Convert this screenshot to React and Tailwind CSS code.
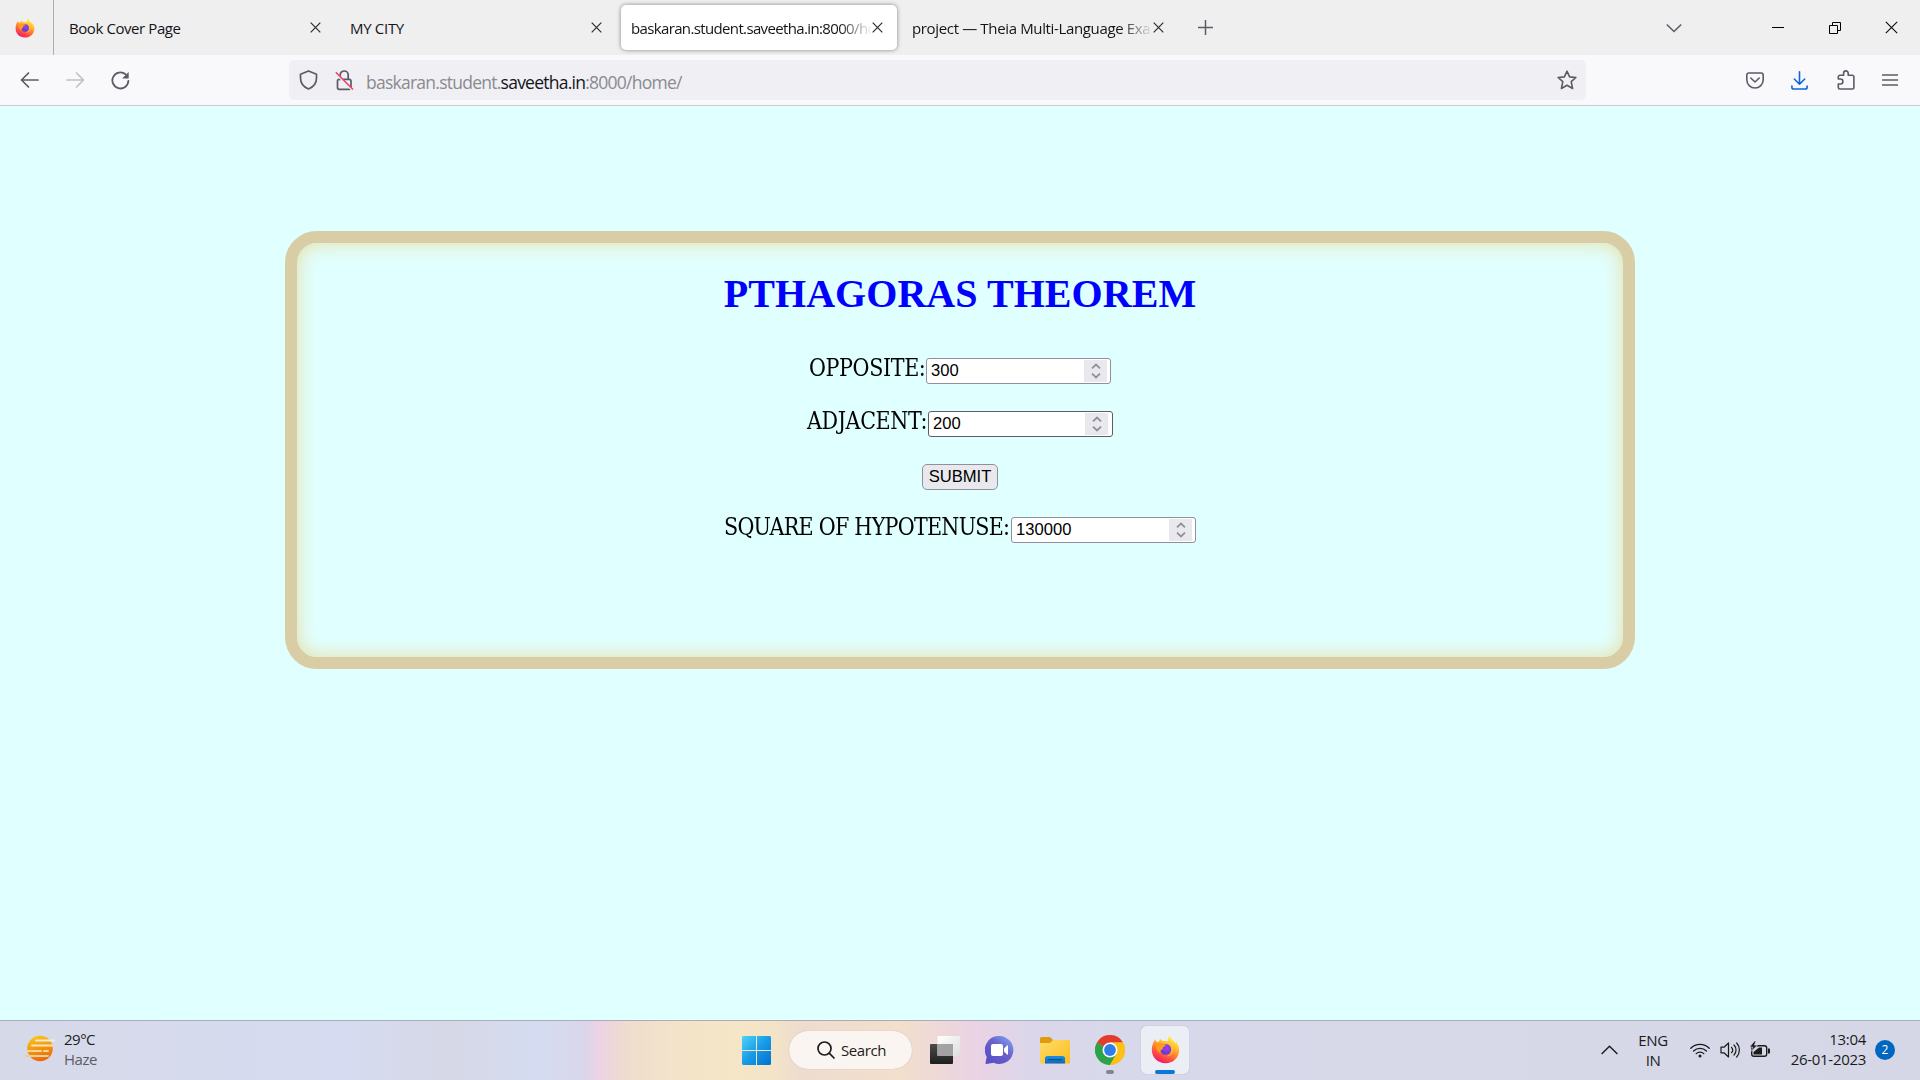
import React from "react";

const UI = "font-['Open_Sans','Noto_Sans',sans-serif]";

function Firefox({ size, id }) {
  return (
    <svg width={size} height={size} viewBox="0 0 32 32">
      <defs>
        <linearGradient id={id + "a"} x1="0.75" y1="0.05" x2="0.3" y2="1">
          <stop offset="0" stopColor="#fff44f" />
          <stop offset="0.3" stopColor="#ffc02e" />
          <stop offset="0.6" stopColor="#ff7033" />
          <stop offset="0.85" stopColor="#fb3350" />
          <stop offset="1" stopColor="#e31587" />
        </linearGradient>
        <radialGradient id={id + "b"} cx="0.6" cy="0.4" r="0.65">
          <stop offset="0" stopColor="#a33dea" />
          <stop offset="0.55" stopColor="#7a3be0" />
          <stop offset="1" stopColor="#4b3fd0" />
        </radialGradient>
      </defs>
      <path
        fill={"url(#" + id + "a)"}
        d="M21 0.500c-2.600 2.700-2.700 5.100-2.300 6.500-1.300-.5-3.500-.8-5-.4-1.500-.5-3-1.500-3.500-2.600-.8.800-1.200 2-1.100 3.100-.900 0-1.800.2-2.600.6C5.500 7 5 5.800 5 4.800 2.200 7.500.6 13 1 18c.6 7.500 7 13.200 15 13.200 8.400 0 15-6.500 15-14.200 0-4-1.600-8-4-10 .5 1.200.8 2.300.8 3.200C26.500 6.400 21.500 5.500 21 .5z"
      />
      <circle cx="16.300" cy="15.800" r="6" fill={"url(#" + id + "b)"} />
      <path
        fill="#ff9a1f"
        d="M6 10c2.500-1.800 5.500-1 7 .2 1.200-.1 3.300 0 3.500.7-.3 1.400-3 1.900-3.300 2.800-.2 1.200-.2 2.100-1.500 2.600-1.800.8-2 2.500-1.200 4C7 18.500 5 14 6 10z"
      />
      <path fill="#ffc42e" d="M19 7c4 2 6 6 5.500 10-.6 4-3.500 6.300-7 6.400 4.300-1.900 5.800-5.200 5-8.600C22 12 20.300 9.600 19 7z" opacity="0.75" />
    </svg>
  );
}

function Cross({ size = 11, color = "#2b2a33", sw = 1.2 }) {
  return (
    <svg width={size} height={size} viewBox="0 0 11 11" stroke={color} strokeWidth={sw} fill="none" className="shrink-0">
      <path d="M.7.7l9.600 9.600M10.300.7L.7 10.300" />
    </svg>
  );
}

function Tab({ title, active, fade, track }) {
  return (
    <div
      className={
        "flex h-[45px] w-[276px] items-center rounded-[5px] pl-[10px] pr-[14px] " +
        (active ? "bg-white shadow-[0_0_4px_rgba(0,0,0,0.45)]" : "")
      }
    >
      <div
        className={
          "h-[22px] w-[241px] shrink-0 whitespace-nowrap text-[15px] leading-[22px] text-[#15141a] " +
          track +
          (fade ? " [mask-image:linear-gradient(to_right,black_208px,transparent_241px)]" : "")
        }
      >
        {title}
      </div>
      <Cross size={11} />
    </div>
  );
}

function TabBar() {
  return (
    <div className="flex h-[55px] items-center bg-[#efefef]">
      <div className="flex h-full w-[54px] items-center border-r border-[#adadb0] pl-[15px]">
        <Firefox size={20} id="ft" />
      </div>
      <div className="ml-[5px] flex gap-[5px]">
        <Tab title="Book Cover Page" track="tracking-[-0.42px]" />
        <Tab title="MY CITY" track="tracking-[-0.3px]" />
        <Tab title="baskaran.student.saveetha.in:8000/ho" active fade track="tracking-[-0.64px]" />
        <Tab title="project — Theia Multi-Language Exa" fade track="tracking-[-0.35px]" />
      </div>
      <svg className="ml-[20px]" width="15" height="15" viewBox="0 0 15 15" stroke="#5b5b66" strokeWidth="1.500">
        <path d="M7.500 0v15M0 7.500h15" />
      </svg>
      <div className="ml-auto flex items-center">
        <svg className="mr-[90px]" width="16" height="10" viewBox="0 0 16 10" stroke="#5b5b66" strokeWidth="1.500" fill="none">
          <path d="M.8 1.500L8 8.500l7.200-7" />
        </svg>
        <div className="mr-[45px] h-px w-3 bg-black" />
        <svg className="mr-[44px]" width="12" height="12" viewBox="0 0 12 12" stroke="#000" fill="none">
          <path d="M.5 3.500h8v8h-8zM3.500 3.500v-3h8v8h-3" />
        </svg>
        <div className="mr-[22px]">
          <Cross size={13} color="#111" sw={1} />
        </div>
      </div>
    </div>
  );
}

function Toolbar() {
  return (
    <div className="flex h-[51px] items-center border-b border-[#c8cacc] bg-[#f9f9fb]">
      <svg className="ml-[20px]" width="19" height="16" viewBox="0 0 19 16" stroke="#5b5b66" strokeWidth="1.700" fill="none" strokeLinecap="round" strokeLinejoin="round">
        <path d="M18 8H1.500M8.500 1L1.500 8l7 7" />
      </svg>
      <svg className="ml-[27px]" width="19" height="16" viewBox="0 0 19 16" stroke="#bfbfc5" strokeWidth="1.700" fill="none" strokeLinecap="round" strokeLinejoin="round">
        <path d="M1 8h16.500M10.500 1l7 7-7 7" />
      </svg>
      <svg className="ml-[26px]" width="19" height="19" viewBox="0 0 19 19" stroke="#5b5b66" strokeWidth="1.800" fill="none" strokeLinecap="round">
        <path d="M14.500 3.300A8 8 0 1 0 17.400 9.800" />
        <path d="M17.700 1v6.500h-6.500z" fill="#5b5b66" stroke="none" />
      </svg>
      <div className="ml-[159px] flex h-10 w-[1297px] items-center rounded-[5px] bg-[#f0f0f4] pl-[10px] pr-[9px]">
        <svg width="19" height="20" viewBox="0 0 19 20" stroke="#5b5b66" strokeWidth="1.700" fill="none" strokeLinejoin="round">
          <path d="M9.500 1L17.500 4.300V8c0 5.200-3 9-8 11C4.500 17 1.500 13.200 1.500 8V4.300z" />
        </svg>
        <svg className="ml-[17px]" width="19" height="21" viewBox="0 0 19 21" fill="none" stroke="#5b5b66" strokeWidth="1.700">
          <rect x="2.500" y="9.300" width="13.500" height="10" rx="1.800" />
          <path d="M5.200 9.300V5a4 4 0 0 1 8 0v4.300" />
          <path d="M0 2.800l17.500 17.500" stroke="#f0f0f4" strokeWidth="2" />
          <path d="M.8 2.300L18 19.500" stroke="#f04066" strokeWidth="1.600" />
        </svg>
        <div className="ml-[12px] mt-[3px] whitespace-nowrap text-[17.500px] leading-6 tracking-[-0.75px] text-[#8a8a90]">
          baskaran.student.<span className="text-[#15141a]">saveetha.in</span>:8000/home/
        </div>
        <svg className="ml-auto" width="20" height="20" viewBox="0 0 20 20" stroke="#5b5b66" strokeWidth="1.600" fill="none" strokeLinejoin="round">
          <path d="M10 1.200l2.600 5.700 6.300.6-4.700 4.200 1.400 6.800L10 15.200l-5.600 3.300 1.400-6.800L1.100 7.500l6.300-.6z" />
        </svg>
      </div>
      <div className="ml-auto mr-[22px] flex items-center">
        <svg width="18" height="17" viewBox="0 0 18 17" stroke="#5b5b66" strokeWidth="1.600" fill="none" strokeLinecap="round" strokeLinejoin="round">
          <path d="M2.800 1h12.400a2 2 0 0 1 2 2v4.800a8.200 8.200 0 0 1-16.400 0V3a2 2 0 0 1 2-2z" />
          <path d="M4.800 6l4.200 4 4.200-4" />
        </svg>
        <svg className="ml-[27px]" width="17" height="19" viewBox="0 0 17 19" stroke="#0a66e0" strokeWidth="1.600" fill="none" strokeLinecap="round" strokeLinejoin="round">
          <path d="M8.500.8v12M3.300 8l5.200 5.200L13.700 8M.9 15v1.200a1.800 1.800 0 0 0 1.800 1.800h11.600a1.800 1.800 0 0 0 1.800-1.800V15" />
        </svg>
        <svg className="ml-[29px]" width="18" height="20" viewBox="0 0 18 20" stroke="#5b5b66" strokeWidth="1.600" fill="none" strokeLinejoin="round">
          <path d="M1.300 9V7a1.700 1.700 0 0 1 1.700-1.700h3.600V3.200a2.300 2.300 0 0 1 4.600 0v2.100h4a1.700 1.700 0 0 1 1.700 1.700v10.300a1.700 1.700 0 0 1-1.700 1.700H3a1.700 1.700 0 0 1-1.700-1.700V14h2.100a2.400 2.400 0 0 0 0-5z" />
        </svg>
        <svg className="ml-[27px]" width="16" height="12" viewBox="0 0 16 12" stroke="#5b5b66" strokeWidth="1.300">
          <path d="M0 1h16M0 6h16M0 11h16" />
        </svg>
      </div>
    </div>
  );
}

function NumberField({ value, dark }) {
  return (
    <div
      className={
        "flex h-[26px] w-[185px] items-center rounded-[3px] border bg-white pl-[4px] " +
        (dark ? "border-[#5d5d66] pr-[4px]" : "border-[#8f8f9d] pr-[3px]")
      }
    >
      <span className="font-['Liberation_Sans',Arial,sans-serif] text-[16.600px] leading-none text-black">{value}</span>
      <div className="ml-auto flex h-[22px] w-[23px] items-center justify-center bg-[#e9e9ed]">
        <svg width="10" height="16" viewBox="0 0 10 16" stroke="#8f8f9d" strokeWidth="1.800" fill="none">
          <path d="M1 5.300L5 1.500l4 3.800M1 10.700l4 3.800 4-3.800" />
        </svg>
      </div>
    </div>
  );
}

function Field({ label, labelClass, value, dark }) {
  return (
    <div className="flex h-[26px] items-center justify-center">
      <div className={"-mt-[7px] scale-y-[1.06] whitespace-nowrap font-['DejaVu_Serif_Condensed','DejaVu_Serif',serif] text-[23px] leading-[26px] text-black [font-stretch:condensed] " + labelClass}>{label}</div>
      <NumberField value={value} dark={dark} />
    </div>
  );
}

function Page() {
  return (
    <main className="flex h-[914px] justify-center bg-[#e0ffff] pt-[125px]">
      <section className="h-[438px] w-[1350px] rounded-[32px] border-[12px] border-[#d8cda4] shadow-[inset_0_0_20px_#e8dda0]">
        <h1 className="mt-[28px] text-center font-['Liberation_Serif',serif] text-[40px] font-bold leading-[46px] tracking-[0.05px] text-[#0000ff]">PTHAGORAS THEOREM</h1>
        <div className="mt-[41px] flex flex-col gap-[27px]">
          <Field label="OPPOSITE:" labelClass="w-[117px] tracking-[-0.4px]" value="300" />
          <Field label="ADJACENT:" labelClass="w-[121px] tracking-[-0.4px]" value="200" dark />
          <div className="flex justify-center">
            <button className="h-[26px] w-[76px] rounded-[5px] border border-[#8f8f9d] bg-[#e9e9ed] font-['Liberation_Sans',Arial,sans-serif] text-[16.600px] leading-[22px] text-black">SUBMIT</button>
          </div>
          <Field label="SQUARE OF HYPOTENUSE:" labelClass="w-[287px] tracking-[-0.76px]" value="130000" />
        </div>
      </section>
    </main>
  );
}

function Taskbar() {
  return (
    <footer className="grid h-[60px] grid-cols-[739px_1fr_auto] items-center border-t border-[#a9adb6] bg-[linear-gradient(to_right,#d6d9e8_0px,#d6dbf1_340px,#d6d8e6_450px,#d5dcf1_540px,#dad6ea_585px,#ecd3e4_600px,#efdccf_625px,#f3e3ca_670px,#f4e6c6_740px,#f3e3c8_775px,#eedccf_800px,#f2dfcc_900px,#ead3e4_975px,#dcd6ea_1030px,#d7d9ea_1110px,#d6d7e6_1920px)]">
      <div className="flex items-center pb-[4px] pl-[25px]">
        <svg className="mb-[1px]" width="30" height="27" viewBox="0 0 30 27">
          <defs>
            <linearGradient id="sun" x1="0.3" y1="0" x2="0.6" y2="1">
              <stop offset="0" stopColor="#fbc51c" />
              <stop offset="1" stopColor="#ec640c" />
            </linearGradient>
          </defs>
          <circle cx="15" cy="13.500" r="12.800" fill="url(#sun)" />
          <g strokeLinecap="round" strokeWidth="1.900">
            <path d="M11 5.500h18" stroke="#f5ecd2" />
            <path d="M7 10.500h20" stroke="#fbe6b4" />
            <path d="M3 16h13M19 16h4" stroke="#fbd98e" />
            <path d="M1 21h22" stroke="#e9cf9c" />
          </g>
        </svg>
        <div className="ml-[9px] text-[15px] leading-[20px] tracking-[-0.5px]">
          <div className="text-[#1b1b1b]">29°C</div>
          <div className="text-[#5c5c66]">Haze</div>
        </div>
      </div>

      <div className="flex h-full items-center pb-[1px]">
        <svg className="ml-[3px]" width="29" height="29" viewBox="0 0 29 29">
          <defs>
            <linearGradient id="win" x1="0" y1="0" x2="29" y2="29" gradientUnits="userSpaceOnUse">
              <stop offset="0" stopColor="#4fd3fb" />
              <stop offset="0.5" stopColor="#189be6" />
              <stop offset="1" stopColor="#0070d2" />
            </linearGradient>
          </defs>
          <path fill="url(#win)" d="M1 0h13v14H0V1zM15 0h13l1 1v13H15zM0 15h14v14H1l-1-1zM15 15h14v13l-1 1H15z" />
        </svg>
        <div className="ml-[18px] flex h-[38px] w-[123px] items-center rounded-full bg-[#fbf5f1] pl-[28px] shadow-[0_0_1px_rgba(0,0,0,0.25)]">
          <svg width="18" height="18" viewBox="0 0 18 18" fill="none" stroke="#1b1b1b" strokeWidth="1.700" strokeLinecap="round">
            <circle cx="7.500" cy="7.500" r="6.500" />
            <path d="M12.200 12.200l4.800 4.800" />
          </svg>
          <span className="ml-[6px] text-[15px] leading-5 tracking-[-0.42px] text-[#1b1b1b]">Search</span>
        </div>
        <svg className="ml-[18px]" width="30" height="28" viewBox="0 0 30 28">
          <defs>
            <linearGradient id="tv" x1="0" y1="0" x2="0" y2="1">
              <stop offset="0" stopColor="#4a4a4a" />
              <stop offset="1" stopColor="#1f1f1f" />
            </linearGradient>
            <linearGradient id="tw" x1="0" y1="0" x2="1" y2="1">
              <stop offset="0" stopColor="#ffffff" />
              <stop offset="1" stopColor="#dedede" />
            </linearGradient>
          </defs>
          <rect x="0" y="8" width="23" height="20" rx="1" fill="url(#tv)" />
          <rect x="7.500" y="0" width="22.500" height="20" rx="1" fill="url(#tw)" />
          <rect x="7.500" y="8" width="15.500" height="12" fill="#a2a2a2" />
        </svg>
        <svg className="ml-[25px]" width="29" height="29" viewBox="0 0 29 29">
          <defs>
            <linearGradient id="chat" x1="0.9" y1="0.1" x2="0.2" y2="0.9">
              <stop offset="0" stopColor="#7d9cf0" />
              <stop offset="0.45" stopColor="#6b62c8" />
              <stop offset="1" stopColor="#5a50c8" />
            </linearGradient>
          </defs>
          <path fill="url(#chat)" d="M14.500 0a14 14 0 1 1-6 26.700L1.500 28c-.7.100-1.200-.4-1-1.100l1.200-6A14 14 0 0 1 14.500 0z" />
          <rect x="6" y="8" width="12" height="12" rx="2" fill="#fff" />
          <path d="M19 12.500l3.300-3.200c.4-.3.700 0 .7.400v8.600c0 .4-.3.700-.7.400L19 15.500z" fill="#fff" />
        </svg>
        <svg className="ml-[26px]" width="30" height="27" viewBox="0 0 30 27">
          <defs>
            <linearGradient id="fold" x1="0" y1="0" x2="1" y2="1">
              <stop offset="0" stopColor="#ffdc6b" />
              <stop offset="1" stopColor="#fabd1c" />
            </linearGradient>
            <linearGradient id="fb" x1="0" y1="0" x2="0" y2="1">
              <stop offset="0" stopColor="#1c8fe0" />
              <stop offset="1" stopColor="#0a69bf" />
            </linearGradient>
          </defs>
          <path d="M0 1.500A1.500 1.500 0 0 1 1.500 0H10l3 3h16a1 1 0 0 1 1 1v10H0z" fill="#de9c0c" />
          <path d="M0 6h10l3-3h17v22.500a1 1 0 0 1-1 1H1a1 1 0 0 1-1-1z" fill="url(#fold)" />
          <path d="M5 26.500V21.500a2.500 2.500 0 0 1 2.500-2.500h15a2.500 2.500 0 0 1 2.500 2.500v5z" fill="url(#fb)" />
          <path d="M8.500 22.700h13" stroke="#07508f" strokeWidth="1.200" strokeLinecap="round" />
        </svg>
        <div className="ml-[25px] flex flex-col items-center pt-[9px]">
          <svg width="30" height="30" viewBox="0 0 30 30">
            <circle cx="15" cy="15" r="15" fill="#fbc116" />
            <path d="M15 15L2 7.500A15 15 0 0 1 28 7.500H15z" fill="#e33b2e" />
            <path d="M2 7.500A15 15 0 0 0 15 30l6.500-11.250L15 15z" fill="#2ba24c" />
            <path d="M15 7.500h13A15 15 0 0 1 15 30l6.500-11.250z" fill="#fbc116" />
            <circle cx="15" cy="15" r="7.500" fill="#fff" />
            <circle cx="15" cy="15" r="5.900" fill="#2f7de9" />
          </svg>
          <div className="mt-[5px] h-1 w-2 rounded-full bg-[#85868d]" />
        </div>
        <div className="ml-[16px] flex h-12 w-12 flex-col items-center rounded-[5px] bg-[#eceef6] pt-[9px] shadow-[0_0_1px_rgba(0,0,0,0.3)]">
          <Firefox size={29} id="fb2" />
          <div className="mt-[6px] h-1 w-5 rounded-full bg-[#0a78d7]" />
        </div>
      </div>

      <div className="flex items-center pb-[1px] pr-[25px] text-[15px] leading-[20px] text-[#1b1b1b]">
        <svg width="17" height="10" viewBox="0 0 17 10" fill="none" stroke="#1b1b1b" strokeWidth="1.400">
          <path d="M.6 9l7.900-7.800L16.400 9" />
        </svg>
        <div className="mb-px ml-[16px] w-[38px] text-center tracking-[-0.4px]">ENG<br />IN</div>
        <svg className="ml-[18px]" width="20" height="15" viewBox="0 0 20 15" fill="none" stroke="#1b1b1b" strokeWidth="1.300" strokeLinecap="round">
          <path d="M.8 5.200a13 13 0 0 1 18.400 0M3.600 8a9 9 0 0 1 12.800 0M6.200 10.600a5.400 5.400 0 0 1 7.600 0" />
          <circle cx="10" cy="13" r="1.500" fill="#1b1b1b" stroke="none" />
        </svg>
        <svg className="ml-[10px]" width="21" height="16" viewBox="0 0 21 16" fill="none" stroke="#1b1b1b" strokeWidth="1.200" strokeLinecap="round" strokeLinejoin="round">
          <path d="M1 5.200h3L8.500 1v14L4 10.800H1zM11.500 5.300a4 4 0 0 1 0 5.400M14 3a7.200 7.200 0 0 1 0 10M16.700 1a10.500 10.500 0 0 1 0 14" />
        </svg>
        <svg className="-mt-[2px] ml-[9px]" width="21" height="17" viewBox="0 0 21 17">
          <rect x="1.700" y="4.700" width="15" height="10.600" rx="2.200" fill="none" stroke="#1b1b1b" strokeWidth="1.400" />
          <path d="M18 7.500h1.200a.8.800 0 0 1 .8.800v3.400a.8.800 0 0 1-.8.800H18z" fill="#1b1b1b" />
          <path d="M3.500 13.500V11L9 6.500h3v7z" fill="#1b1b1b" />
          <path d="M5-.5L-.5 6h3L1.500 10 7.500 4.200H4.500L6-.5z" fill="#1b1b1b" stroke="#d6d7e6" strokeWidth=".7" />
        </svg>
        <div className="mb-[3px] ml-[19px] w-[76px] whitespace-nowrap text-right tracking-[-0.3px]">13:04<br />26-01-2023</div>
        <div className="ml-[9px] flex h-5 w-5 items-center justify-center rounded-full bg-[#0067c0] text-[12px] leading-none text-white">2</div>
      </div>
    </footer>
  );
}

export default function App() {
  return (
    <div className={"flex h-[1080px] w-[1920px] flex-col overflow-hidden " + UI}>
      <TabBar />
      <Toolbar />
      <Page />
      <Taskbar />
    </div>
  );
}
